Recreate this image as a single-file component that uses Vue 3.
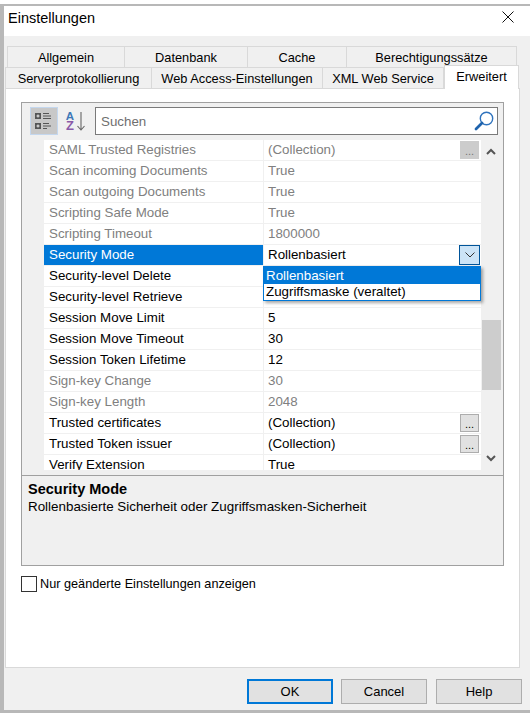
<script setup>
const tabsTop = [
  { label: 'Allgemein', cls: 't1' },
  { label: 'Datenbank', cls: 't2' },
  { label: 'Cache', cls: 't3' },
  { label: 'Berechtigungssätze', cls: 't4' }
]
const tabsBottom = [
  { label: 'Serverprotokollierung', cls: 'b1' },
  { label: 'Web Access-Einstellungen', cls: 'b2' },
  { label: 'XML Web Service', cls: 'b3' }
]
const rows = [
  { name: 'SAML Trusted Registries', value: '(Collection)', muted: true, more: true },
  { name: 'Scan incoming Documents', value: 'True', muted: true },
  { name: 'Scan outgoing Documents', value: 'True', muted: true },
  { name: 'Scripting Safe Mode', value: 'True', muted: true },
  { name: 'Scripting Timeout', value: '1800000', muted: true },
  { name: 'Security Mode', value: 'Rollenbasiert', selected: true },
  { name: 'Security-level Delete', value: 'True' },
  { name: 'Security-level Retrieve', value: 'True' },
  { name: 'Session Move Limit', value: '5' },
  { name: 'Session Move Timeout', value: '30' },
  { name: 'Session Token Lifetime', value: '12' },
  { name: 'Sign-key Change', value: '30', muted: true },
  { name: 'Sign-key Length', value: '2048', muted: true },
  { name: 'Trusted certificates', value: '(Collection)', more: true },
  { name: 'Trusted Token issuer', value: '(Collection)', more: true },
  { name: 'Verify Extension', value: 'True' }
]
</script>

<template>
  <div class="window">
    <header class="titlebar">
      <span class="title">Einstellungen</span>
      <svg class="close" width="12" height="12" viewBox="0 0 12 12">
        <path d="M0.5 0.5 L11.5 11.5 M11.5 0.5 L0.5 11.5" stroke="#111" stroke-width="1" fill="none" />
      </svg>
    </header>

    <div class="body">
      <div class="tabs">
        <div class="tabrow top">
          <div v-for="t in tabsTop" :key="t.label" class="tab" :class="t.cls">{{ t.label }}</div>
        </div>
        <div class="tabrow bottom">
          <div v-for="t in tabsBottom" :key="t.label" class="tab" :class="t.cls">{{ t.label }}</div>
          <div class="tab active">Erweitert</div>
        </div>
      </div>

      <div class="page">
        <div class="grid">
          <div class="toolbar">
            <button class="toolbtn on">
              <svg width="20" height="20" viewBox="0 0 20 20">
                <rect x="1" y="2" width="6" height="6" fill="#555" />
                <rect x="1" y="12" width="6" height="6" fill="#555" />
                <path d="M2.5 5h3M4 3.5v3M2.5 15h3M4 13.5v3" stroke="#eee" stroke-width="1" />
                <path d="M9 2.5h6M9 5h8M9 7.5h8M9 12.5h6M9 15h8M9 17.5h4" stroke="#555" stroke-width="1.2" />
              </svg>
            </button>
            <div class="sortbtn">
              <div class="az">
                <span class="a">A</span>
                <span class="z">Z</span>
              </div>
              <svg width="8" height="19" viewBox="0 0 8 19">
                <path d="M4 0 V18 M0.5 14 L4 18 L7.5 14" stroke="#666" stroke-width="1.1" fill="none" />
              </svg>
            </div>
            <div class="search">
              <span class="search-text">Suchen</span>
              <svg width="20" height="20" viewBox="0 0 20 20">
                <circle cx="12.5" cy="7.5" r="6.2" stroke="#2f73bd" stroke-width="1.4" fill="#fff" />
                <path d="M8 12 L2 18" stroke="#1f63ad" stroke-width="2.8" stroke-linecap="round" />
              </svg>
            </div>
          </div>

          <div class="listwrap">
            <div class="gutter"></div>
            <div class="list">
              <div
                v-for="r in rows"
                :key="r.name"
                class="row"
                :class="{ muted: r.muted, selected: r.selected }"
              >
                <div class="name">{{ r.name }}</div>
                <div class="value">
                  <span>{{ r.value }}</span>
                  <span v-if="r.more" class="more" :class="{ off: r.muted }">...</span>
                  <span v-if="r.selected" class="combo">
                    <svg width="10" height="6" viewBox="0 0 10 6">
                      <path d="M0.5 0.5 L5 5 L9.5 0.5" stroke="#333" stroke-width="1" fill="none" />
                    </svg>
                  </span>
                </div>
              </div>
            </div>
            <div class="scrollbar">
              <svg class="arrow up" width="10" height="7" viewBox="0 0 10 7">
                <path d="M1 6 L5 2 L9 6" stroke="#555" stroke-width="2" fill="none" />
              </svg>
              <div class="thumb"></div>
              <svg class="arrow down" width="10" height="7" viewBox="0 0 10 7">
                <path d="M1 1 L5 5 L9 1" stroke="#555" stroke-width="2" fill="none" />
              </svg>
            </div>
            <div class="dropdown">
              <div class="opt current">Rollenbasiert</div>
              <div class="opt">Zugriffsmaske (veraltet)</div>
            </div>
          </div>

          <div class="desc">
            <div class="desc-title">Security Mode</div>
            <div class="desc-text">Rollenbasierte Sicherheit oder Zugriffsmasken-Sicherheit</div>
          </div>
        </div>

        <label class="check">
          <span class="box"></span>
          <span>Nur geänderte Einstellungen anzeigen</span>
        </label>
      </div>

      <footer class="footer">
        <button class="btn primary">OK</button>
        <button class="btn">Cancel</button>
        <button class="btn">Help</button>
      </footer>
    </div>
  </div>
</template>

<style>
html, body { margin: 0; padding: 0; background: #fff; }
</style>

<style scoped>
.window {
  width: 530px;
  height: 713px;
  box-sizing: border-box;
  display: flex;
  flex-direction: column;
  overflow: hidden;
  background: #fff;
  font-family: "Liberation Sans", sans-serif;
  color: #000;
  position: relative;
}
.titlebar {
  height: 32px;
  margin-top: 4px;
  border-top: 2px solid #b8b8b8;
  border-left: 4px solid #b8b8b8;
  box-sizing: border-box;
  padding: 0 16px 7px 4px;
  display: flex;
  align-items: center;
  justify-content: space-between;
  background: #fff;
  flex: none;
}
.title { font-size: 14.5px; }
.close { margin-top: -2px; }
.body {
  flex: 1;
  display: flex;
  flex-direction: column;
  background: #f0f0f0;
  border-left: 4px solid #b8b8b8;
  border-bottom: 3px solid #b8b8b8;
  padding: 10px 0 0 1px;
  min-height: 0;
}
.tabs { font-size: 12.8px; flex: none; }
.tabrow { display: flex; height: 21px; }
.tabrow.top { margin-left: 2px; }
.tab {
  box-sizing: border-box;
  border: 1px solid #d9d9d9;
  border-left: none;
  border-bottom: none;
  display: flex;
  align-items: center;
  justify-content: center;
  background: #f0f0f0;
}
.tab:first-child { border-left: 1px solid #d9d9d9; }
.t1 { width: 118px; }
.t2 { width: 123px; }
.t3 { width: 99px; }
.t4 { width: 170px; }
.b1 { width: 147px; }
.b2 { width: 171px; }
.b3 { width: 121px; }
.active {
  width: 75px;
  height: 24px;
  margin-top: -2px;
  background: #fff;
  border: 1px solid #d9d9d9;
  border-bottom: none;
  position: relative;
  z-index: 1;
  padding-bottom: 3px;
}
.page {
  flex: none;
  width: 515px;
  height: 580px;
  box-sizing: border-box;
  background: #fff;
  border: 1px solid #d9d9d9;
  padding: 13px 0 0 15px;
  display: flex;
  flex-direction: column;
}
.grid {
  width: 483px;
  height: 464px;
  box-sizing: border-box;
  border: 1px solid #a0a0a0;
  background: #f0f0f0;
  display: flex;
  flex-direction: column;
}
.toolbar {
  height: 37px;
  flex: none;
  display: flex;
  align-items: flex-start;
  padding: 4px 5px 0 8px;
  box-sizing: border-box;
}
.toolbtn {
  width: 28px;
  height: 28px;
  padding: 0;
  border: 1px solid #c4d7ee;
  background: #c8c8c8;
  display: flex;
  align-items: center;
  justify-content: center;
}
.sortbtn {
  width: 37px;
  height: 28px;
  display: flex;
  align-items: center;
  padding-left: 6px;
  gap: 1px;
  box-sizing: border-box;
}
.az {
  display: flex;
  flex-direction: column;
  font: bold 11.5px/10px "Liberation Sans", sans-serif;
  width: 12px;
  text-align: center;
}
.a { color: #3d78b8; }
.z { color: #8a5aa8; font-size: 13px; }
.search {
  flex: 1;
  height: 28px;
  box-sizing: border-box;
  border: 1px solid #7a7a7a;
  background: #fff;
  display: flex;
  align-items: center;
  justify-content: space-between;
  padding: 0 3px 0 5px;
}
.search-text { font: 13.33px "Liberation Sans", sans-serif; color: #6f6f6f; }
.listwrap {
  height: 330px;
  flex: none;
  display: flex;
  position: relative;
}
.gutter { width: 22px; flex: none; }
.list {
  width: 437px;
  flex: none;
  background: #fff;
  overflow: hidden;
  font: 13.33px "Liberation Sans", sans-serif;
}
.row {
  display: flex;
  height: 21px;
  box-sizing: border-box;
  border-bottom: 1px solid #f0f0f0;
  align-items: center;
  flex: none;
}
.name {
  width: 219px;
  box-sizing: border-box;
  padding: 0 0 2px 5px;
  height: 100%;
  display: flex;
  align-items: center;
  flex: none;
}
.value {
  flex: 1;
  box-sizing: border-box;
  border-left: 1px solid #f0f0f0;
  padding-left: 4px;
  height: 100%;
  display: flex;
  align-items: center;
  justify-content: space-between;
  position: relative;
}
.value > span:first-child { position: relative; top: -1px; }
.muted { color: #808080; }
.selected .name { background: #0078d7; color: #fff; height: 20px; align-self: flex-start; }
.more {
  width: 19px;
  height: 18px;
  box-sizing: border-box;
  border: 1px solid #adadad;
  background: #e1e1e1;
  color: #000;
  font-size: 11px;
  line-height: 18px;
  text-align: center;
  margin-right: 2px;
}
.more.off { background: #cccccc; border-color: #cccccc; color: #777; }
.combo {
  width: 21px;
  height: 20px;
  box-sizing: border-box;
  border: 1px solid #005499;
  background: #cce4f7;
  display: flex;
  align-items: center;
  justify-content: center;
  margin-right: 1px;
}
.scrollbar {
  width: 20px;
  flex: none;
  padding-left: 1px;
  box-sizing: border-box;
  display: flex;
  flex-direction: column;
  align-items: center;
  position: relative;
}
.arrow { position: absolute; left: 5px; }
.arrow.up { top: 8px; }
.arrow.down { bottom: 8px; }
.thumb {
  position: absolute;
  top: 180px;
  left: 1px;
  width: 19px;
  height: 70px;
  background: #cdcdcd;
}
.dropdown {
  position: absolute;
  left: 241px;
  top: 126px;
  width: 218px;
  box-sizing: border-box;
  border: 1px solid #0078d7;
  background: #fff;
  box-shadow: 2px 2px 3px rgba(0, 0, 0, 0.35);
  font: 13.33px "Liberation Sans", sans-serif;
  z-index: 2;
}
.opt { height: 16px; line-height: 16px; padding-left: 2px; }
.opt.current { height: 17px; line-height: 17px; background: #0078d7; color: #fff; }
.desc {
  margin-top: 5px;
  flex: 1;
  border-top: 1px solid #a0a0a0;
  padding: 4px 6px;
  font: 13.4px "Liberation Sans", sans-serif;
}
.desc-title { font-weight: bold; font-size: 14.5px; line-height: 18px; }
.desc-text { line-height: 18px; }
.check {
  margin-top: 10px;
  display: flex;
  align-items: center;
  gap: 3px;
  font: 12.7px "Liberation Sans", sans-serif;
  height: 16px;
}
.box {
  width: 16px;
  height: 16px;
  box-sizing: border-box;
  border: 1px solid #333;
  background: #fff;
}
.footer {
  flex: 1;
  display: flex;
  align-items: flex-start;
  padding: 11px 0 0 242px;
  gap: 8px;
}
.btn {
  width: 86px;
  height: 25px;
  box-sizing: border-box;
  border: 1px solid #adadad;
  background: #e1e1e1;
  font: 13px "Liberation Sans", sans-serif;
  padding: 0;
  color: #000;
}
.btn:last-child { margin-left: 1px; }
.btn.primary { border: 2px solid #0078d7; }
</style>
